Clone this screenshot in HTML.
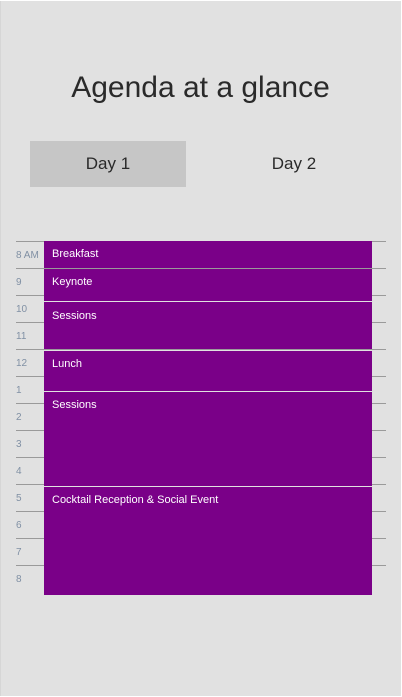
<!DOCTYPE html>
<html><head><meta charset="utf-8"><style>
html,body{margin:0;padding:0;background:#fff;width:402px;height:697px;overflow:hidden}
#g{position:absolute;left:0;top:1px;width:401px;height:695px;background:#e1e1e1;box-shadow:inset 1px 0 0 #d6d6d6;font-family:"Liberation Sans",Arial,sans-serif}
h1{position:absolute;left:0;width:401px;top:70px;margin:0;text-align:center;font-weight:normal;font-size:30px;color:#2a2a2a}
.tab{position:absolute;top:140px;width:156px;height:46px;line-height:46px;text-align:center;font-size:17px;color:#2a2a2a}
.ln{position:absolute;left:16px;width:370px;height:1px;background:#9a9a9a}
.lb{position:absolute;left:16px;font-size:10px;color:#8090a4}
.ev{position:absolute;left:44px;width:328px;background:#7a0088;color:#fff;font-size:11px;box-sizing:border-box;padding:6px 0 0 8px}
</style></head><body><div id="g">
<h1>Agenda at a glance</h1>
<div class="tab" style="left:30px;background:#c6c6c6">Day 1</div>
<div class="tab" style="left:216px">Day 2</div>
<div class="ln" style="top:240px"></div><div class="lb" style="top:249px">8 AM</div>
<div class="ln" style="top:267px"></div><div class="lb" style="top:276px">9</div>
<div class="ln" style="top:294px"></div><div class="lb" style="top:303px">10</div>
<div class="ln" style="top:321px"></div><div class="lb" style="top:330px">11</div>
<div class="ln" style="top:348px"></div><div class="lb" style="top:357px">12</div>
<div class="ln" style="top:375px"></div><div class="lb" style="top:384px">1</div>
<div class="ln" style="top:402px"></div><div class="lb" style="top:411px">2</div>
<div class="ln" style="top:429px"></div><div class="lb" style="top:438px">3</div>
<div class="ln" style="top:456px"></div><div class="lb" style="top:465px">4</div>
<div class="ln" style="top:483px"></div><div class="lb" style="top:492px">5</div>
<div class="ln" style="top:510px"></div><div class="lb" style="top:519px">6</div>
<div class="ln" style="top:537px"></div><div class="lb" style="top:546px">7</div>
<div class="ln" style="top:564px"></div><div class="lb" style="top:573px">8</div>
<div class="ev" style="top:240px;height:27px;padding-top:7px">Breakfast</div>
<div class="ev" style="top:268px;height:32px;padding-top:7px">Keynote</div>
<div class="ev" style="top:301px;height:47px;padding-top:8px">Sessions</div>
<div class="ev" style="top:350px;height:40px;padding-top:7px">Lunch</div>
<div class="ev" style="top:391px;height:94px;padding-top:7px">Sessions</div>
<div class="ev" style="top:486px;height:108px;padding-top:7px">Cocktail Reception &amp; Social Event</div>
</div></body></html>
